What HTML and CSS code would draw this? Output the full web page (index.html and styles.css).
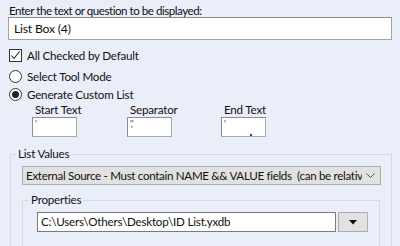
FILE: index.html
```html
<!DOCTYPE html>
<html lang="en">
<head>
  <meta charset="UTF-8" />
  <title>List Box Settings</title>
  <link rel="stylesheet" href="styles.css">
</head>
<body>
  <div class="panel">
    <div class="prompt">Enter the text or question to be displayed:</div>
    <div class="textbox title-box">List Box (4)</div>

    <div class="option check-option">
      <span class="check">
        <svg width="11" height="11" viewBox="0 0 11 11"><path d="M1.5 5.5 L4 8.5 L9.5 1.5" fill="none" stroke="#222" stroke-width="1.1"/></svg>
      </span>
      All Checked by Default
    </div>
    <div class="option"><span class="radio"></span>Select Tool Mode</div>
    <div class="option"><span class="radio on"></span>Generate Custom List</div>

    <div class="custom-fields">
      <div class="field">
        <span class="field-label">Start Text</span>
        <div class="small-box">'</div>
      </div>
      <div class="field">
        <span class="field-label">Separator</span>
        <div class="small-box">','</div>
      </div>
      <div class="field">
        <span class="field-label">End Text</span>
        <div class="small-box caret">'</div>
      </div>
    </div>

    <fieldset class="group">
      <legend>List Values</legend>
      <div class="combo">
        <span class="combo-text">External Source - Must contain NAME &amp;&amp; VALUE fields&nbsp; (can be relativ</span>
        <svg class="chevron" width="9" height="5" viewBox="0 0 9 5"><path d="M0.5 0.5 L4.5 4.5 L8.5 0.5" fill="none" stroke="#555" stroke-width="1"/></svg>
      </div>
      <fieldset class="group inner">
        <legend>Properties</legend>
        <div class="path-row">
          <div class="textbox path-box">C:\Users\Others\Desktop\ID List.yxdb</div>
          <div class="drop-btn">
            <svg width="8" height="5" viewBox="0 0 8 5"><path d="M0 0 H8 L4 4.5 Z" fill="#111"/></svg>
          </div>
        </div>
      </fieldset>
    </fieldset>
  </div>
</body>
</html>
```

FILE: styles.css
```css
* {
  margin: 0;
  padding: 0;
  box-sizing: border-box;
}
body {
  background-color: #eaeef9;
  font-family: 'Lato', 'Noto Sans', sans-serif;
  font-size: 11.6px;
  letter-spacing: -0.2px;
  color: #111;
  overflow: hidden;
  height: 246px;
}
.panel {
  width: 400px;
  padding: 4px 8px 0 8px;
}
.prompt {
  line-height: 13px;
  padding-left: 1px;
  letter-spacing: -0.48px;
}
.textbox {
  background-color: #fff;
  border: 1px solid #a3a3a3;
  border-top-color: #8a8a8a;
  white-space: nowrap;
  overflow: hidden;
}
.title-box {
  height: 23px;
  line-height: 21px;
  padding-left: 5px;
  font-size: 12.2px;
}
.option {
  display: flex;
  align-items: center;
  gap: 5px;
  height: 18px;
  padding-left: 1px;
}
.check-option {
  margin: 6px 0 3px;
}
.check {
  width: 13px;
  height: 13px;
  border: 1px solid #333;
  background-color: #fff;
  display: flex;
  align-items: center;
  justify-content: center;
}
.radio {
  width: 13px;
  height: 13px;
  border: 1px solid #333;
  border-radius: 50%;
  background-color: #fff;
  display: flex;
  align-items: center;
  justify-content: center;
}
.radio.on::after {
  content: '';
  width: 7px;
  height: 7px;
  border-radius: 50%;
  background-color: #222;
}
.custom-fields {
  display: grid;
  grid-template-columns: 95px 94px 60px;
  margin-left: 24px;
}
.field {
  display: flex;
  flex-direction: column;
}
.field-label {
  line-height: 14px;
  padding-left: 3px;
  white-space: nowrap;
}
.small-box {
  width: 45px;
  height: 20px;
  background-color: #fff;
  border: 1px solid #8e8e8e;
  border-right-color: #a8a8a8;
  border-bottom-color: #a8a8a8;
  font-size: 9px;
  line-height: 9px;
  padding: 1px 2px;
  color: #334;
  position: relative;
}
.small-box.caret::after {
  content: '';
  position: absolute;
  left: 28px;
  bottom: 0;
  width: 2px;
  height: 2px;
  background-color: #2a3fd0;
}
.group {
  border: 1px solid #d6d9e0;
  margin: 9px 0 0 2px;
  padding: 0 0 30px 0;
  min-width: 0;
}
.group legend {
  margin-left: 5px;
  padding: 0 2px;
  line-height: 16px;
}
.combo {
  display: flex;
  align-items: center;
  height: 19px;
  margin: 4px 10px 0 11px;
  background-color: #e1e1e1;
  border: 1px solid #adadad;
  padding: 0 5px 0 3px;
}
.combo-text {
  flex: 1;
  min-width: 0;
  white-space: nowrap;
  overflow: hidden;
  letter-spacing: -0.32px;
}
.chevron {
  margin-left: 4px;
  flex-shrink: 0;
}
.group.inner {
  margin: 7px 11px 0 11px;
  padding-bottom: 20px;
}
.group.inner legend {
  margin-left: 6px;
}
.path-row {
  display: flex;
  gap: 2px;
  margin: 4px 11px 0 14px;
}
.path-box {
  flex: 1;
  height: 20px;
  line-height: 18px;
  padding-left: 3px;
  border-color: #7a7a7a;
}
.drop-btn {
  width: 30px;
  height: 20px;
  background-color: #e1e1e1;
  border: 1px solid #adadad;
  display: flex;
  align-items: center;
  justify-content: center;
}
```
